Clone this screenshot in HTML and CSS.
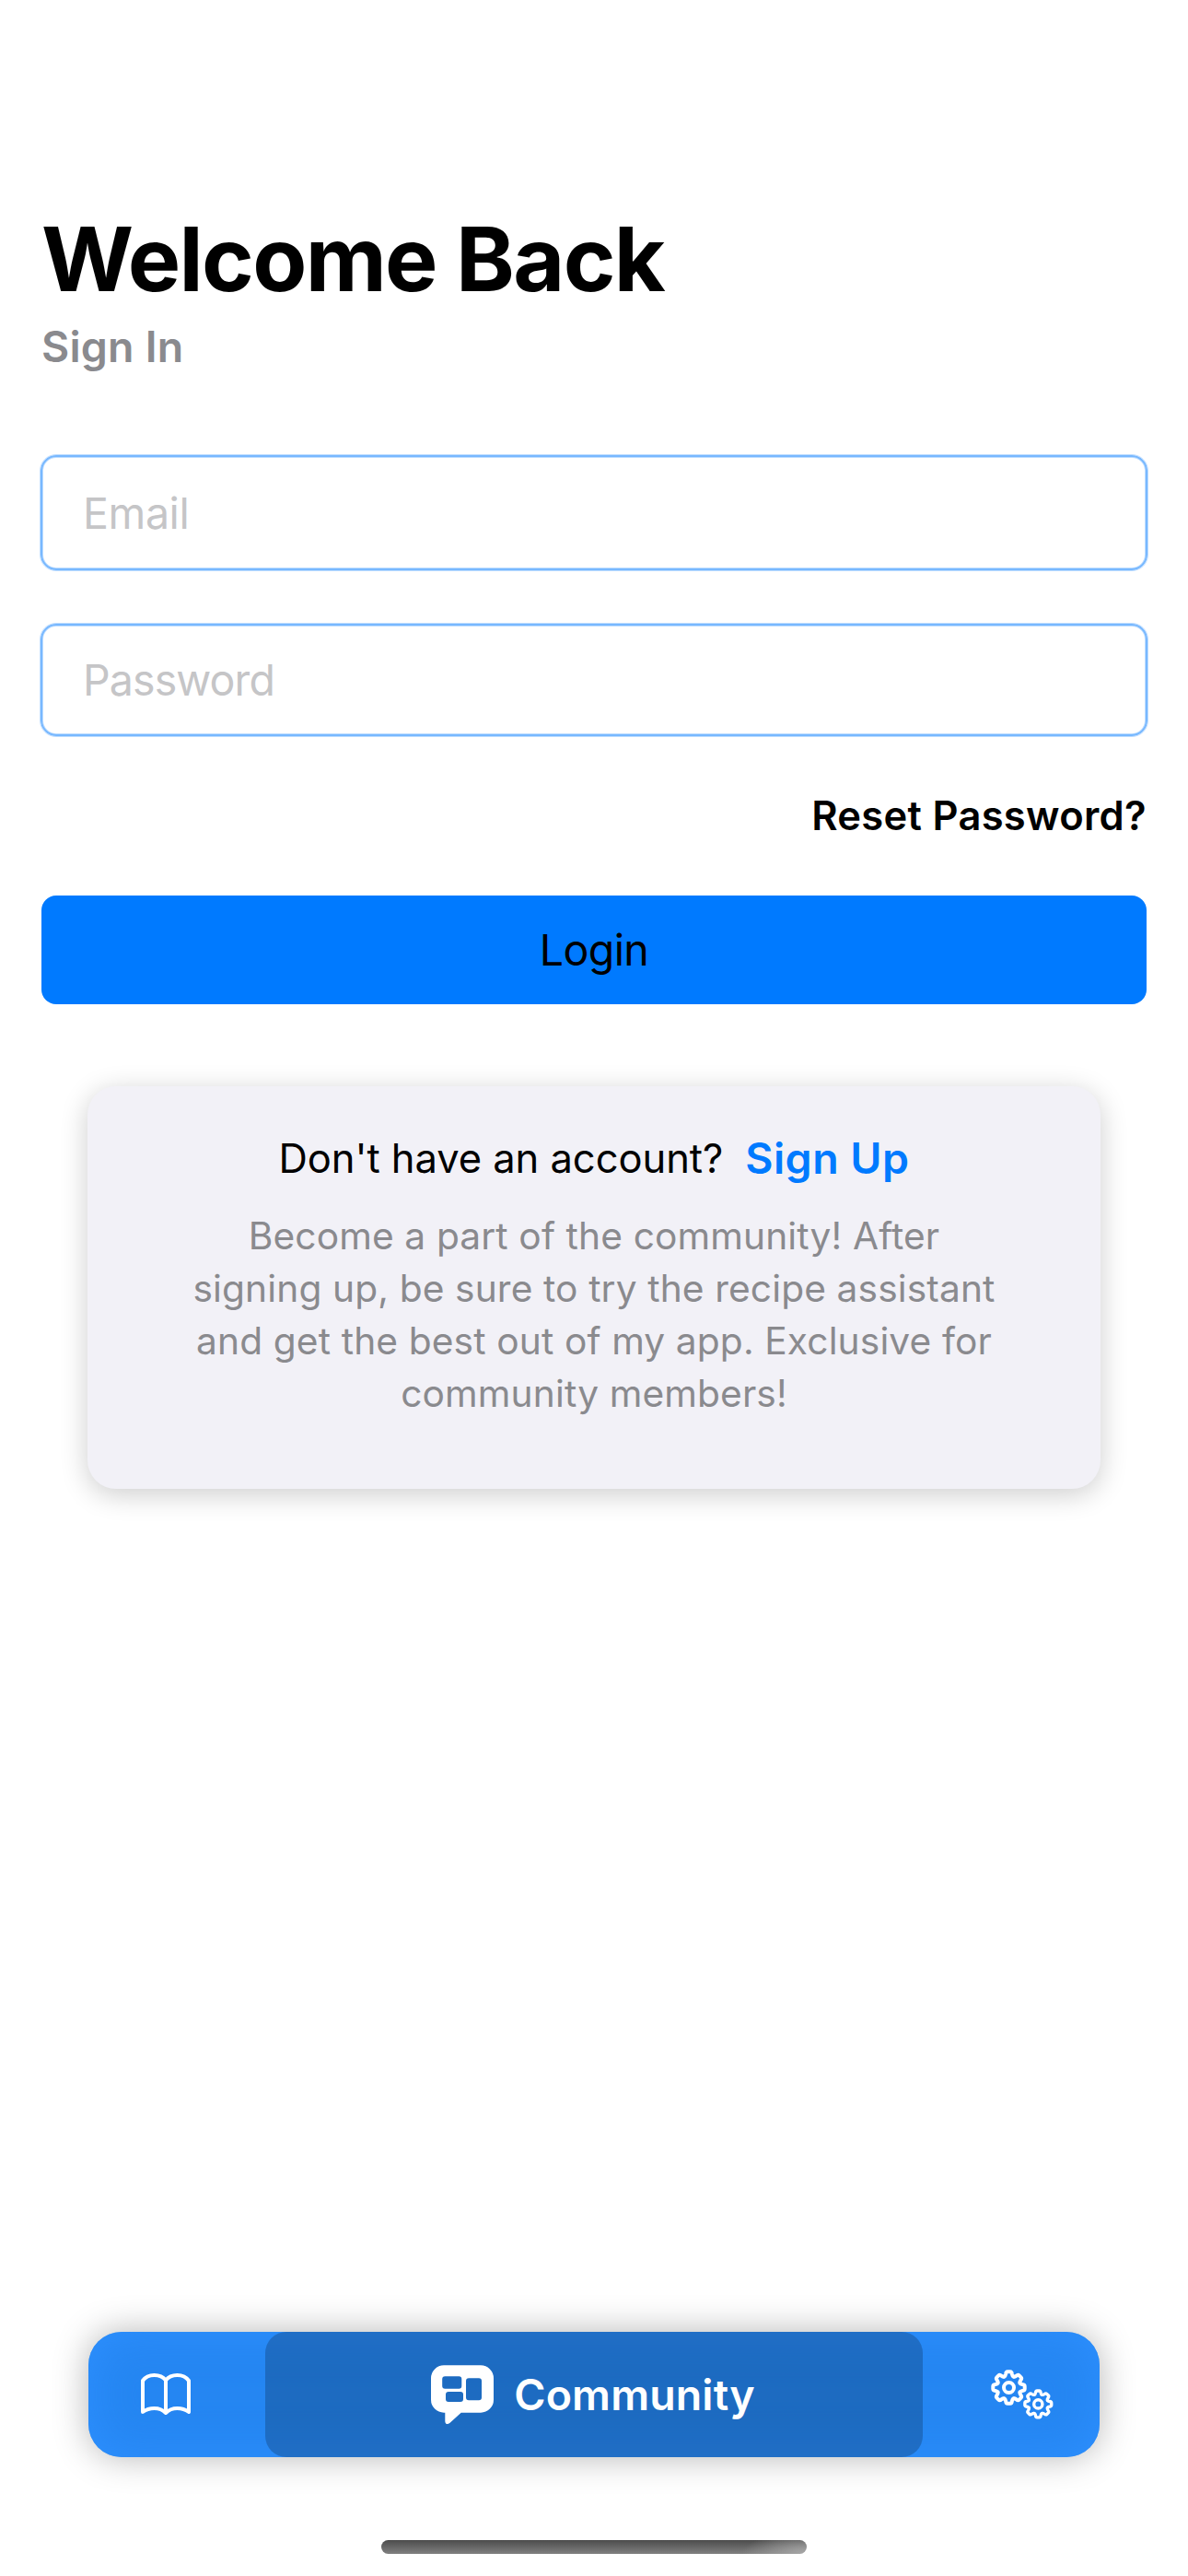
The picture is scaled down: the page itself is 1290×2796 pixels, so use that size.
FILE: index.html
```html
<!DOCTYPE html>
<html lang="en">
<head>
<meta charset="utf-8">
<meta name="viewport" content="width=device-width">
<title>Welcome Back</title>
<link rel="stylesheet" href="styles.css">
</head>
<body>
<div class="screen">
  <main class="content">
    <header class="heading">
      <h1 class="title">Welcome Back</h1>
      <p class="subtitle">Sign In</p>
    </header>
    <form class="form">
      <input class="field field-email" type="text" placeholder="Email">
      <input class="field field-password" type="password" placeholder="Password">
      <a class="reset">Reset Password?</a>
      <button class="login" type="button">Login</button>
    </form>
    <section class="card">
      <p class="signup"><span class="question">Don't have an account?</span><a class="signup-link">Sign Up</a></p>
      <p class="blurb">Become a part of the community! After<br>signing up, be sure to try the recipe assistant<br>and get the best out of my app. Exclusive for<br>community members!</p>
    </section>
  </main>
  <nav class="tabs">
    <a class="tab tab-recipes" aria-label="Recipes">
      <svg width="54" height="46" viewBox="0 0 54 46" fill="none" stroke="#fff" stroke-width="4" stroke-linecap="round" stroke-linejoin="round">
        <path d="M27 7.5C24 3.7 19.5 2 14.5 2S5 3.7 2 8V42C5.500 39.400 10 38 14.500 38S23.500 39.400 27 43C30.500 39.400 35 38 39.500 38S48.500 39.400 52 42V8C49 3.700 44.500 2 39.500 2S30 3.700 27 7.500V43"/>
      </svg>
    </a>
    <a class="tab tab-active">
      <svg width="68" height="65" viewBox="0 0 68 65">
        <path fill="#fff" fill-rule="evenodd" d="M14 .3H54A14 14 0 0 1 68 14.300V37.700A14 14 0 0 1 54 51.700H32.700L20.300 63C18 65 15.300 64.200 15.300 61V51.700H14A14 14 0 0 1 0 37.700V14.300A14 14 0 0 1 14 .3ZM15.200 12.300a3 3 0 0 0-3 3v7.400a3 3 0 0 0 3 3h15.100a3 3 0 0 0 3-3v-7.400a3 3 0 0 0-3-3ZM19 29a3 3 0 0 0-3 3v5a3 3 0 0 0 3 3h13a3 3 0 0 0 3-3v-5a3 3 0 0 0-3-3ZM41 14.300a3 3 0 0 0-3 3v18a3 3 0 0 0 3 3h11a3 3 0 0 0 3-3v-18a3 3 0 0 0-3-3Z"/>
      </svg>
      <span class="tab-label">Community</span>
    </a>
    <a class="tab tab-settings" aria-label="Settings">
      <svg width="68" height="54" viewBox="0 0 68 54" fill="none" stroke="#fff" stroke-width="4" stroke-linecap="round">
        <defs>
          <path id="tooth" d="M-5-12C-4-12.500-3.600-13.200-3.400-14.500C-3.200-16.600-2.600-17.200-1.400-17.200H1.400C2.600-17.200 3.200-16.600 3.400-14.500C3.600-13.200 4-12.500 5-12"/>
          <g id="gear">
            <use href="#tooth"/>
            <use href="#tooth" transform="rotate(45)"/>
            <use href="#tooth" transform="rotate(90)"/>
            <use href="#tooth" transform="rotate(135)"/>
            <use href="#tooth" transform="rotate(180)"/>
            <use href="#tooth" transform="rotate(225)"/>
            <use href="#tooth" transform="rotate(270)"/>
            <use href="#tooth" transform="rotate(315)"/>
            <circle r="5.500"/>
          </g>
        </defs>
        <use href="#gear" transform="translate(19.500 19.500)"/>
        <use href="#gear" transform="translate(51.300 37.400) scale(.84)"/>
      </svg>
    </a>
  </nav>
  <div class="home-indicator"></div>
</div>
</body>
</html>
```
FILE: styles.css
```css
* {
  box-sizing: border-box;
  margin: 0;
}

body {
  background: #fff;
  color: #000;
  font-family: Inter, "Liberation Sans", sans-serif;
}

.screen {
  display: flex;
  flex-direction: column;
  width: 1290px;
  height: 2796px;
  padding: 223px 0 24px;
}

.content {
  display: flex;
  flex-direction: column;
  flex: 1;
}

.heading {
  padding-left: 45px;
}

.title {
  font-size: 96.5px;
  font-weight: 700;
  line-height: 116px;
  letter-spacing: -1.65px;
}

.subtitle {
  margin-top: 8px;
  font-size: 46.5px;
  font-weight: 600;
  line-height: 58px;
  letter-spacing: .2px;
  color: #8a8a8e;
}

.form {
  display: flex;
  flex-direction: column;
  padding: 88px 43px 0;
}

.field {
  width: 100%;
  padding: 0 46px;
  border: 1px solid #bcdcff;
  border-radius: 18px;
  outline: 0;
  background: #fff;
  box-shadow: inset 0 0 0 2px #78b8ff, inset 0 0 0 3px #bcdcff;
  font-family: inherit;
  font-size: 46.5px;
}

.field::placeholder {
  color: #c5c5c7;
  opacity: 1;
}

.field-email {
  height: 127px;
  letter-spacing: -.4px;
}

.field-password {
  height: 124px;
  margin-top: 56px;
  letter-spacing: -.9px;
}

.reset {
  align-self: flex-end;
  margin: 58px 2px 0 0;
  font-size: 43.5px;
  font-weight: 600;
  line-height: 54px;
  letter-spacing: .3px;
}

.login {
  height: 118px;
  margin: 60px 2px 0;
  padding: 0;
  border: 0;
  border-radius: 16px;
  background: #007aff;
  color: #000;
  font-family: inherit;
  font-size: 46.5px;
  letter-spacing: -.6px;
}

.card {
  width: 1100px;
  height: 437px;
  margin: 89px 0 0 95px;
  padding-top: 49px;
  border-radius: 31px;
  background: #f2f1f7;
  box-shadow: 0 6px 30px rgba(0, 0, 0, .2);
  text-align: center;
}

.signup {
  display: flex;
  justify-content: center;
  align-items: center;
  gap: 24px;
}

.question {
  font-size: 43.5px;
  line-height: 54px;
  letter-spacing: -.05px;
}

.signup-link {
  color: #007aff;
  font-size: 46.5px;
  font-weight: 600;
  line-height: 58px;
  letter-spacing: .5px;
}

.blurb {
  margin-top: 27px;
  color: #8a8a8e;
  font-size: 40.7px;
  line-height: 57px;
  letter-spacing: .12px;
}

.tabs {
  display: grid;
  grid-template-columns: 192px 714px 192px;
  width: 1098px;
  height: 136px;
  margin: 0 0 90px 96px;
  border-radius: 36px;
  background: #2586f2;
  box-shadow: 0 0 38px rgba(0, 0, 0, .29), inset 0 0 50px #2e90ff;
}

.tab {
  display: flex;
  justify-content: center;
  align-items: center;
}

.tab-recipes {
  padding-right: 24px;
}

.tab-settings {
  padding-left: 24px;
}

.tab-active {
  gap: 22px;
  padding-right: 2px;
  border-radius: 23px;
  background: rgba(0, 0, 0, .2);
}

.tab-label {
  color: #fff;
  font-size: 46.5px;
  font-weight: 600;
  letter-spacing: .15px;
}

.home-indicator {
  width: 462px;
  height: 15px;
  margin-left: 414px;
  border-radius: 8px;
  background:
    radial-gradient(ellipse 70px 24px at 100% 100%, #a8a8a8, transparent),
    linear-gradient(#4c4c4c, #808080);
}
```
